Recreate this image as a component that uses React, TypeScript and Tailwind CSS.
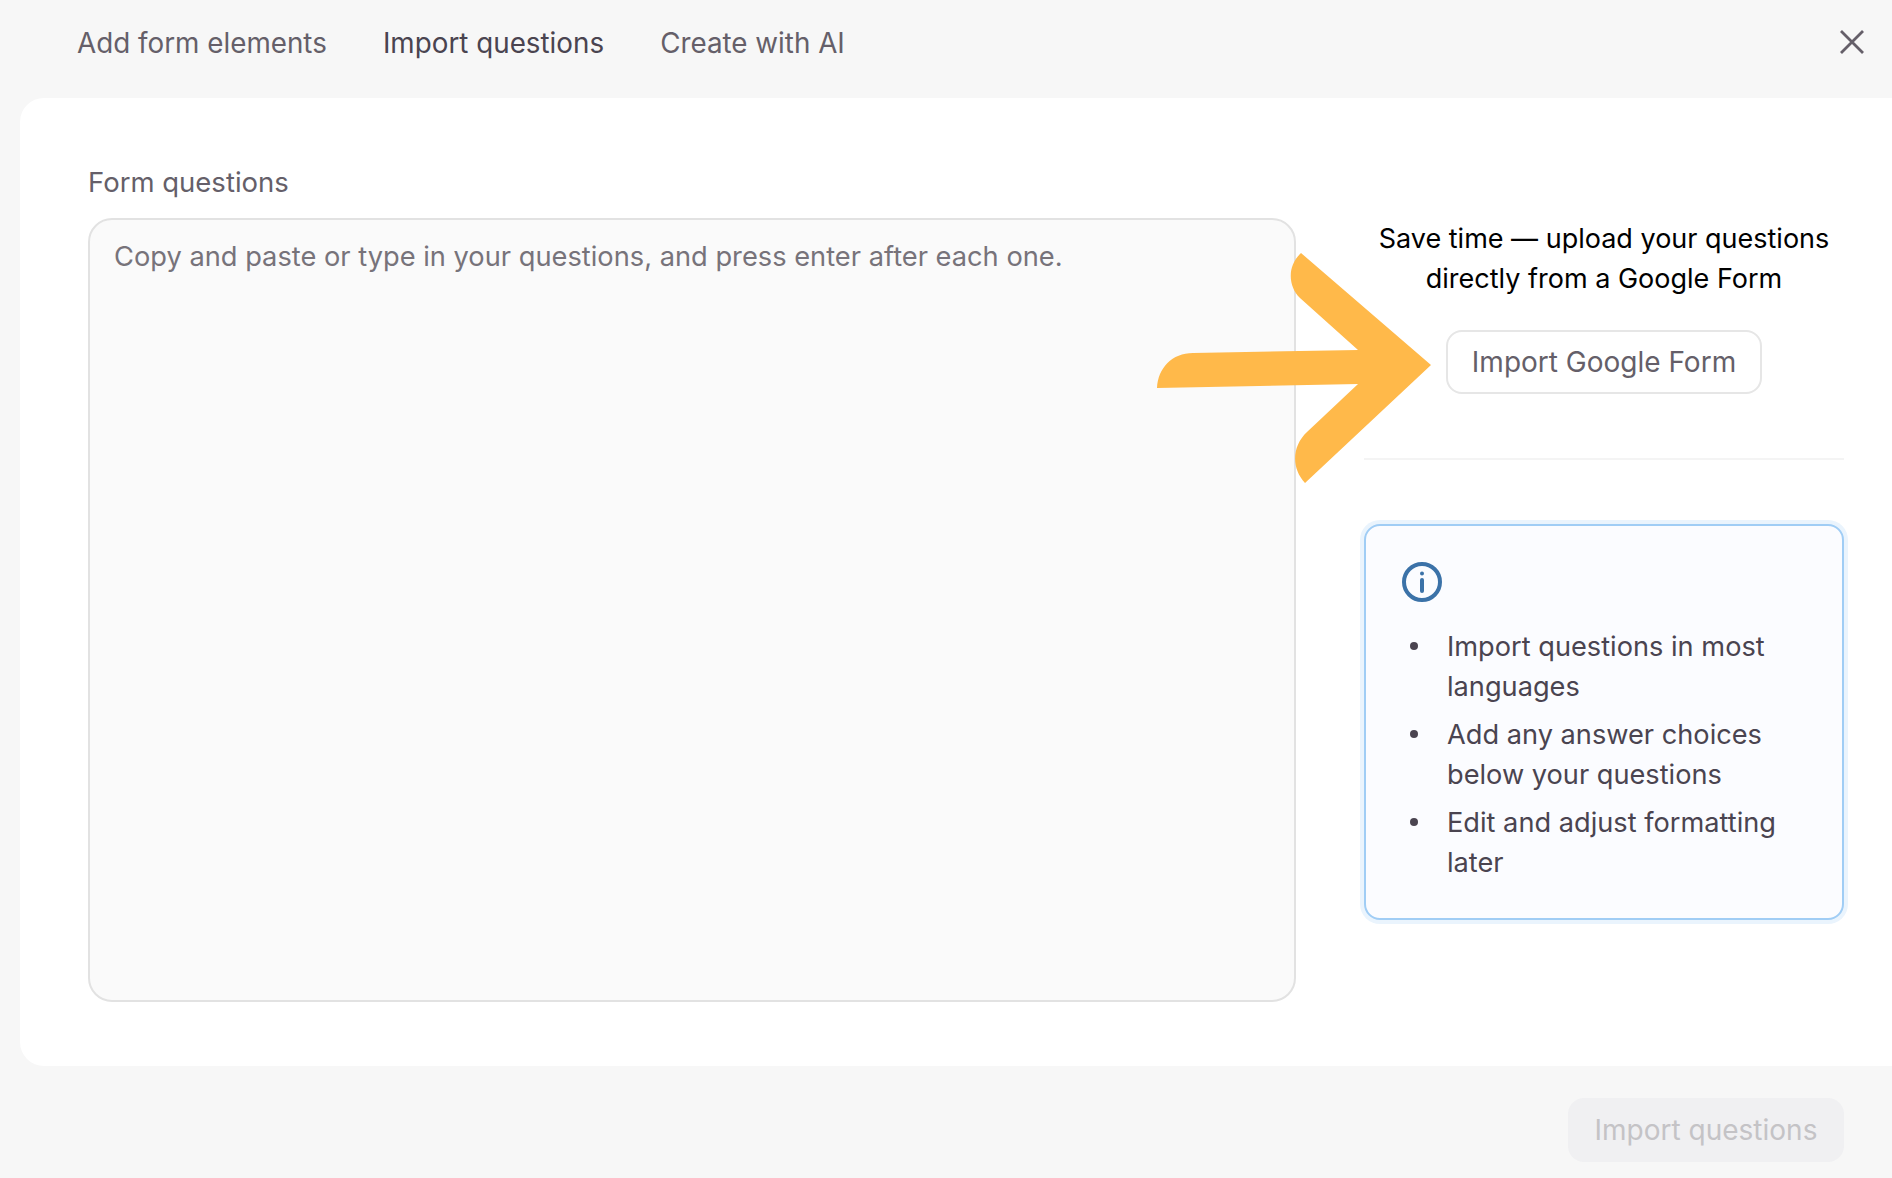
import { FC } from 'react';

const tabs = [
  { label: 'Add form elements', active: false },
  { label: 'Import questions', active: true },
  { label: 'Create with AI', active: false },
];

const tips = [
  'Import questions in most languages',
  'Add any answer choices below your questions',
  'Edit and adjust formatting later',
];

const Arrow: FC = () => (
  <svg
    className="absolute left-[-214px] top-[31px] pointer-events-none"
    width="290"
    height="240"
    viewBox="1150 250 290 240"
    fill="#ffb94a"
  >
    <path d="M1157 388 C1158 368 1172 353 1193 353 L1358 350 L1300 298 C1288 286 1287 266 1301 253 L1431 365 L1305 483 C1291 468 1292 446 1307 432 L1358 384 Z" />
  </svg>
);

const InfoIcon: FC = () => (
  <svg width="40" height="40" viewBox="0 0 40 40" fill="none" stroke="#3b72a8" strokeWidth="4">
    <circle cx="20" cy="20" r="18" />
    <path d="M20 18v11" strokeLinecap="round" />
    <circle cx="20" cy="11.5" r="2" fill="#3b72a8" stroke="none" />
  </svg>
);

export default function App() {
  return (
    <div className="flex flex-col h-[1178px] overflow-hidden bg-[#f7f7f7] font-['Inter',sans-serif] text-[27px] leading-[40px]">
      {/* tabs */}
      <div className="flex items-center justify-between h-[98px] shrink-0 pl-[77px] pr-[28px] pb-[14px]">
        <div className="flex gap-[56px] text-[27.8px] pt-[2px]">
          {tabs.map((tab) => (
            <div key={tab.label} className={tab.active ? 'text-[#4a4450]' : 'text-[#655f69]'}>
              {tab.label}
            </div>
          ))}
        </div>
        <svg width="24" height="24" viewBox="0 0 24 24" fill="none" stroke="#655f69" strokeWidth="2.8">
          <path d="M1 1l22 22M23 1L1 23" />
        </svg>
      </div>

      {/* card */}
      <div className="flex ml-[20px] h-[968px] shrink-0 bg-white rounded-l-[24px] pl-[68px] pt-[64px]">
        <div className="w-[1208px] shrink-0">
          <div className="text-[#655f69] text-[27.5px] mb-[16px]">Form questions</div>
          <textarea
            className="block w-full h-[784px] resize-none rounded-[24px] border-2 border-[#e2e2e2] bg-[#fafafa] px-[24px] pt-[17px] text-[27.25px] outline-none placeholder:text-[#77737a]"
            placeholder="Copy and paste or type in your questions, and press enter after each one."
          />
        </div>

        <div className="relative w-[480px] shrink-0 ml-[68px] mt-[57px]">
          <Arrow />
          <div className="text-center text-black">
            Save time — upload your questions
            <br />
            directly from a Google Form
          </div>
          <div className="flex justify-center mt-[31px]">
            <button className="w-[316px] h-[64px] rounded-[16px] border-2 border-[#e6e6e6] bg-white text-[28px] text-[#655f69]">
              Import Google Form
            </button>
          </div>
          <div className="h-[2px] bg-[#f4f4f4] mt-[64px]" />
          <div className="mt-[64px] h-[396px] rounded-[16px] border-2 border-[#a0cdf5] bg-[#fbfcff] pl-[36px] pt-[36px] shadow-[0_0_0_4px_#eaf4fd]">
            <InfoIcon />
            <ul className="ml-[8px] pr-[44px] mt-[25px] flex flex-col gap-[8px] text-[27.2px] text-[#4a4450]">
              {tips.map((tip) => (
                <li key={tip} className="flex gap-[29px]">
                  <div className="w-[8px] h-[8px] shrink-0 mt-[15px] rounded-full bg-[#4a4450]" />
                  <div>{tip}</div>
                </li>
              ))}
            </ul>
          </div>
        </div>
      </div>

      {/* footer */}
      <div className="flex justify-end pr-[48px] pt-[32px]">
        <button className="w-[276px] h-[64px] rounded-[16px] bg-[#f0f0f2] text-[28px] text-[#c4c3c6]">
          Import questions
        </button>
      </div>
    </div>
  );
}
